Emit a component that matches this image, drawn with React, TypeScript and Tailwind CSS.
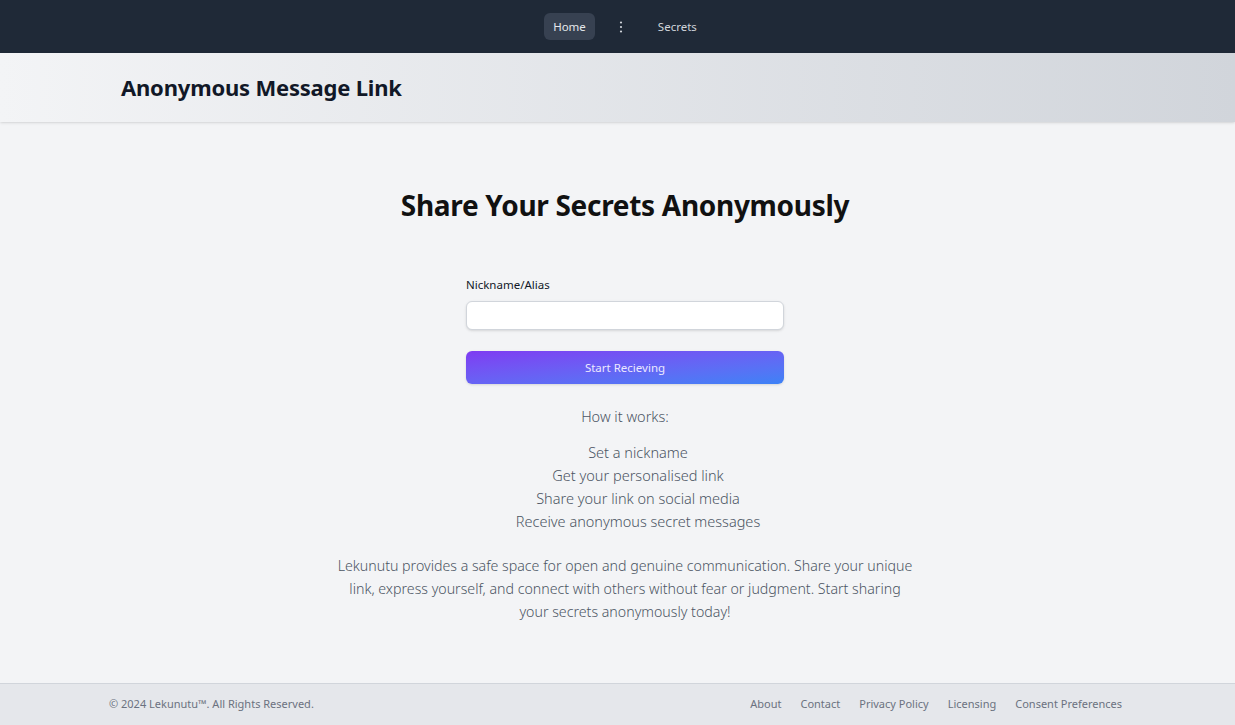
import React from "react";

export default function App() {
  const font = { fontFamily: '"Noto Sans", "Open Sans", sans-serif' };
  return (
    <div className="min-h-[725px] flex flex-col bg-[#f3f4f6]" style={font}>
      <nav className="h-[53px] bg-[#1f2937] flex items-center justify-center pl-[16px]">
        <button className="h-[27px] px-[9px] rounded-md bg-[#374151] text-[#e5e7eb] text-[11.5px]">Home</button>
        <button className="ml-[14px] w-[24px] h-[27px] flex items-center justify-center text-[#d1d5db]">
          <svg width="4" height="12" viewBox="0 0 4 12" fill="currentColor">
            <circle cx="2" cy="1.5" r="1.1" />
            <circle cx="2" cy="6" r="1.1" />
            <circle cx="2" cy="10.5" r="1.1" />
          </svg>
        </button>
        <button className="ml-[15px] h-[27px] px-[10px] rounded-md text-[#d1d5db] text-[11.5px]">Secrets</button>
      </nav>
      <header className="h-[69px] bg-gradient-to-r from-[#f3f4f6] to-[#d1d5db] flex items-center pl-[121px] shadow-sm">
        <h1 className="text-[22px] font-bold text-[#111827] tracking-[-0.2px]">Anonymous Message Link</h1>
      </header>
      <main className="flex-1 flex flex-col items-center pl-[15px]">
        <h2 className="mt-[62px] text-[28px] font-bold text-[#111111] tracking-[-0.3px]">Share Your Secrets Anonymously</h2>
        <div className="mt-[50px] w-[318px] flex flex-col">
          <label className="text-[11.5px] font-normal text-[#111827]">Nickname/Alias</label>
          <input className="mt-[8px] h-[29px] rounded-md border border-[#d1d5db] bg-white shadow-sm" />
          <button className="mt-[21px] h-[33px] rounded-md bg-gradient-to-br from-[#7e3af2] to-[#3b82f6] text-[#ece8ff] text-[11.5px] shadow-sm">Start Recieving</button>
        </div>
        <div className="mt-[22px] text-[14.5px] font-light text-[#4b5563] text-center">How it works:</div>
        <ul className="mt-[13px] pl-[26px] text-[14.5px] font-light text-[#4b5563] text-center leading-[23px]">
          <li>Set a nickname</li>
          <li>Get your personalised link</li>
          <li>Share your link on social media</li>
          <li>Receive anonymous secret messages</li>
        </ul>
        <p className="mt-[21px] max-w-[580px] text-[14.2px] font-light text-[#4b5563] text-center leading-[23px]">
          Lekunutu provides a safe space for open and genuine communication. Share your unique link, express yourself, and connect with others without fear or judgment. Start sharing your secrets anonymously today!
        </p>
      </main>
      <footer className="h-[42px] bg-[#e5e7eb] border-t border-[#d1d5db] flex items-center justify-between pl-[109px] pr-[113px] text-[11px] text-[#6b7280]">
        <span>© 2024 Lekunutu™. All Rights Reserved.</span>
        <div className="flex gap-[19px]">
          <a>About</a>
          <a>Contact</a>
          <a>Privacy Policy</a>
          <a>Licensing</a>
          <a>Consent Preferences</a>
        </div>
      </footer>
    </div>
  );
}
